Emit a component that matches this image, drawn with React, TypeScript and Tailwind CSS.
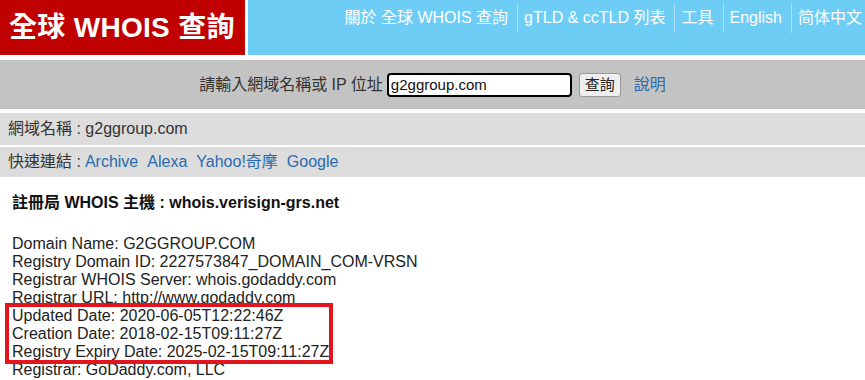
import React from 'react';

const navItems = ['關於 全球 WHOIS 查詢', 'gTLD & ccTLD 列表', '工具', 'English', '简体中文'];

const whoisLines = [
  'Domain Name: G2GGROUP.COM',
  'Registry Domain ID: 2227573847_DOMAIN_COM-VRSN',
  'Registrar WHOIS Server: whois.godaddy.com',
  'Registrar URL: http://www.godaddy.com',
  'Updated Date: 2020-06-05T12:22:46Z',
  'Creation Date: 2018-02-15T09:11:27Z',
  'Registry Expiry Date: 2025-02-15T09:11:27Z',
  'Registrar: GoDaddy.com, LLC',
];

const App: React.FC = () => {
  return (
    <div
      className="w-[865px] h-[380px] overflow-hidden bg-white text-[#222]"
      style={{ fontFamily: '"Liberation Sans", Arial, "Noto Sans CJK TC", sans-serif' }}
    >
      {/* header */}
      <div className="flex h-[55px] gap-[3px]">
        <div className="w-[245px] bg-[#c00000] flex items-center pl-[9px]">
          <span className="text-white font-bold text-[28px] leading-none tracking-[0.3px]">全球 WHOIS 查詢</span>
        </div>
        <div className="flex-1 bg-[#6dcdf5] flex justify-end items-start pt-[3px]">
          {navItems.map((item, i) => (
            <div
              key={item}
              className={`h-[30px] flex items-center pl-[6px] text-white text-[16px] ${i > 0 ? 'border-l border-[#a9e2f9]' : ''} ${i === navItems.length - 1 ? 'pr-[3px]' : 'pr-[9px]'}`}
            >
              {item}
            </div>
          ))}
        </div>
      </div>

      {/* search bar */}
      <div className="mt-[5px] h-[49px] bg-[#c3c3c3] flex items-center justify-center">
        <span className="text-[16px] text-[#333] mr-[4px]">請輸入網域名稱或 IP 位址</span>
        <input
          readOnly
          value="g2ggroup.com"
          className="w-[185px] h-[24px] border-2 border-black rounded-[4px] bg-white px-[2px] text-[15px] text-[#111] outline-none"
        />
        <button className="ml-[7px] w-[42px] h-[24px] bg-[#efefef] border border-[#9a9a9a] rounded-[3px] text-[15px] text-[#222]">
          查詢
        </button>
        <a className="ml-[13px] text-[16px] text-[#2a6ab0]">說明</a>
      </div>

      {/* info rows */}
      <div className="mt-[4px] h-[32px] bg-[#dcdcdc] flex items-center px-[8px] text-[16px] text-[#333]">
        網域名稱 : g2ggroup.com
      </div>
      <div className="mt-[2px] h-[30px] bg-[#dcdcdc] flex items-center px-[8px] text-[16px] text-[#333]">
        <span>快速連結 :</span>
        <a className="ml-[4px] text-[#2a6ab0]">Archive</a>
        <a className="ml-[9px] text-[#2a6ab0]">Alexa</a>
        <a className="ml-[9px] text-[#2a6ab0]">Yahoo!奇摩</a>
        <a className="ml-[9px] text-[#2a6ab0]">Google</a>
      </div>

      {/* whois content */}
      <div className="px-[12px] pt-[16px]">
        <div className="font-bold text-[16px] text-[#111] h-[20px] leading-[20px]">註冊局 WHOIS 主機 : whois.verisign-grs.net</div>
        <div className="relative mt-[22px] text-[16px] leading-[18px] text-[#222]">
          {whoisLines.map((line) => (
            <div key={line}>{line}</div>
          ))}
          <div className="absolute left-[-7px] top-[68px] w-[328px] h-[61px] border-4 border-[#e3141c]" />
        </div>
      </div>
    </div>
  );
};

export default App;
